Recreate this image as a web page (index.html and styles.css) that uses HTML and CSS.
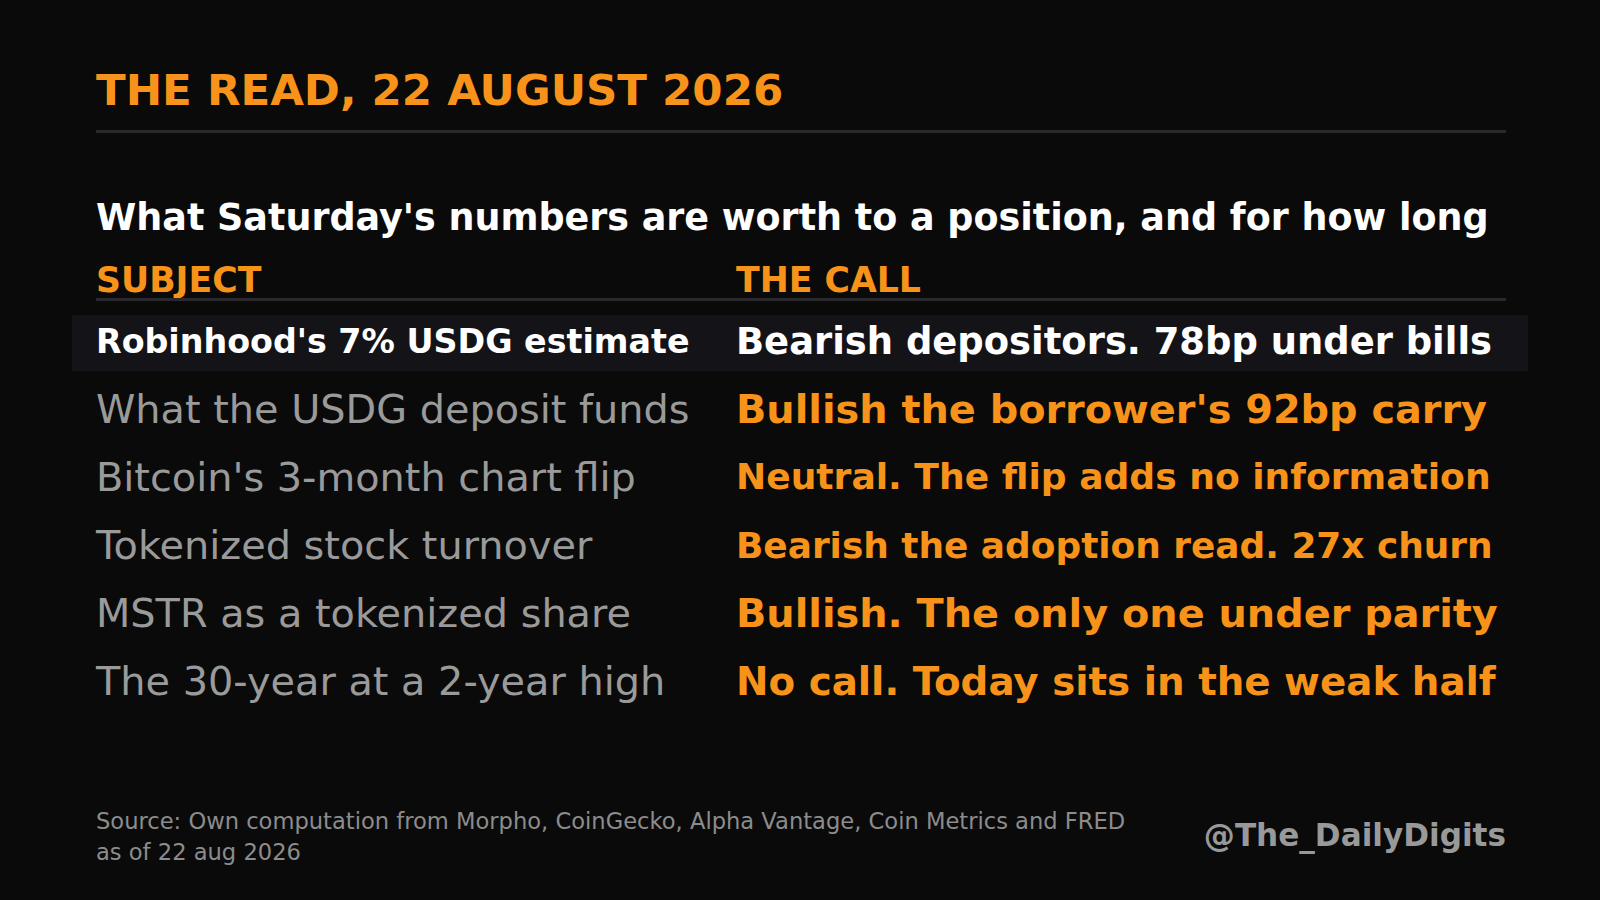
FILE: index.html
```html
<!DOCTYPE html>
<html lang="en">
<head>
<meta charset="utf-8">
<title>The Read, 22 August 2026</title>
<link rel="stylesheet" href="styles.css">
</head>
<body>
<main class="page">
  <h1 class="title">THE READ, 22 AUGUST 2026</h1>
  <div class="rule"></div>
  <h2 class="subtitle">What Saturday's numbers are worth to a position, and for how long</h2>
  <div class="table">
    <div class="head">
      <div class="cell-subject">SUBJECT</div>
      <div class="cell-call">THE CALL</div>
    </div>
    <div class="rule rule-head"></div>
    <div class="row row-top">
      <div class="cell-subject top-subject">Robinhood's 7% USDG estimate</div>
      <div class="cell-call top-call">Bearish depositors. 78bp under bills</div>
    </div>
    <div class="row">
      <div class="cell-subject subj">What the USDG deposit funds</div>
      <div class="cell-call call">Bullish the borrower's 92bp carry</div>
    </div>
    <div class="row">
      <div class="cell-subject subj">Bitcoin's 3-month chart flip</div>
      <div class="cell-call call call-s3">Neutral. The flip adds no information</div>
    </div>
    <div class="row">
      <div class="cell-subject subj">Tokenized stock turnover</div>
      <div class="cell-call call call-s4">Bearish the adoption read. 27x churn</div>
    </div>
    <div class="row">
      <div class="cell-subject subj">MSTR as a tokenized share</div>
      <div class="cell-call call">Bullish. The only one under parity</div>
    </div>
    <div class="row">
      <div class="cell-subject subj">The 30-year at a 2-year high</div>
      <div class="cell-call call call-s6">No call. Today sits in the weak half</div>
    </div>
  </div>
  <footer class="footer">
    <div class="source">
      <div>Source: Own computation from Morpho, CoinGecko, Alpha Vantage, Coin Metrics and FRED</div>
      <div>as of 22 aug 2026</div>
    </div>
    <div class="handle">@The_DailyDigits</div>
  </footer>
</main>
</body>
</html>
```

FILE: styles.css
```css
html, body {
  margin: 0;
  padding: 0;
  background: #0a0a0a;
}

body {
  font-family: "DejaVu Sans", "Liberation Sans", sans-serif;
  color: #ffffff;
}

.page {
  box-sizing: border-box;
  width: 1600px;
  height: 900px;
  padding: 64px 94px 32px 96px;
  display: flex;
  flex-direction: column;
  overflow: hidden;
}

.title {
  margin: 0;
  font-size: 43.5px;
  line-height: 52px;
  font-weight: bold;
  color: #f7931a;
  white-space: nowrap;
}

.rule {
  height: 3px;
  background: #29292d;
  margin-top: 14px;
}

.subtitle {
  margin: 63px 0 0;
  font-size: 36.5px;
  line-height: 44px;
  font-weight: bold;
  color: #ffffff;
  white-space: nowrap;
}

.table {
  margin-top: 22px;
  display: flex;
  flex-direction: column;
}

.head {
  display: grid;
  grid-template-columns: 640px 1fr;
  font-size: 34.7px;
  line-height: 36px;
  font-weight: bold;
  color: #f7931a;
  white-space: nowrap;
}

.rule-head {
  margin-top: 0;
}

.row {
  display: grid;
  grid-template-columns: 640px 1fr;
  height: 68px;
  align-items: center;
  white-space: nowrap;
}

.row > div {
  padding-bottom: 4px;
}

.row-top {
  height: 56px;
  margin: 14px -22px 6px -24px;
  padding: 0 22px 0 24px;
  background: #141418;
  grid-template-columns: 640px 1fr;
}

.top-subject {
  font-size: 33.3px;
  font-weight: bold;
  color: #ffffff;
}

.top-call {
  font-size: 36.9px;
  font-weight: bold;
  color: #ffffff;
}

.subj {
  font-size: 39.8px;
  font-weight: normal;
  color: #9a9a9a;
}

.call {
  font-size: 39.8px;
  font-weight: bold;
  color: #f7931a;
}

.call-s3 {
  font-size: 36.1px;
}

.call-s4 {
  font-size: 35.9px;
}

.call-s6 {
  font-size: 38.8px;
}

.footer {
  margin-top: auto;
  display: flex;
  align-items: center;
  justify-content: space-between;
}

.source {
  font-size: 22.6px;
  line-height: 31px;
  color: #8c8c8c;
  white-space: nowrap;
}

.handle {
  font-size: 31.1px;
  line-height: 36px;
  font-weight: bold;
  color: #999999;
  padding-top: 0;
  margin-bottom: 4px;
  white-space: nowrap;
}
```
